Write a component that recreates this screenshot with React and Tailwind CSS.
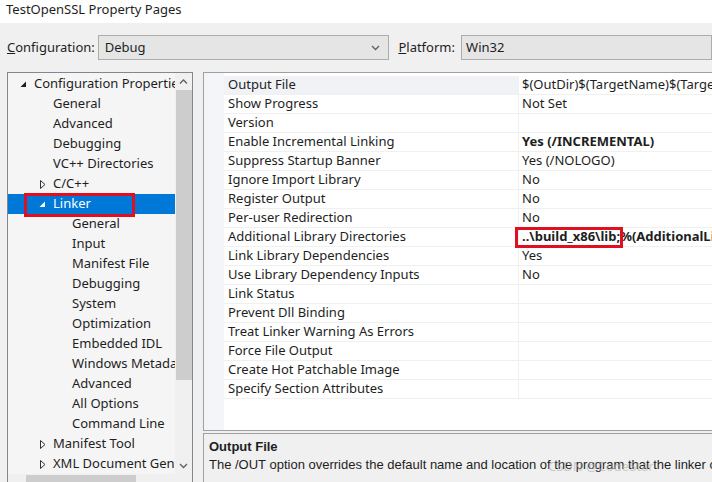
import React from 'react';

const font = { fontFamily: '"Noto Sans", "Liberation Sans", sans-serif' };

const treeRows = [
  { label: 'Configuration Properties', level: 0, icon: 'open' },
  { label: 'General', level: 1 },
  { label: 'Advanced', level: 1 },
  { label: 'Debugging', level: 1 },
  { label: 'VC++ Directories', level: 1 },
  { label: 'C/C++', level: 1, icon: 'closed' },
  { label: 'Linker', level: 1, icon: 'open', selected: true },
  { label: 'General', level: 2 },
  { label: 'Input', level: 2 },
  { label: 'Manifest File', level: 2 },
  { label: 'Debugging', level: 2 },
  { label: 'System', level: 2 },
  { label: 'Optimization', level: 2 },
  { label: 'Embedded IDL', level: 2 },
  { label: 'Windows Metadata', level: 2 },
  { label: 'Advanced', level: 2 },
  { label: 'All Options', level: 2 },
  { label: 'Command Line', level: 2 },
  { label: 'Manifest Tool', level: 1, icon: 'closed' },
  { label: 'XML Document Generator', level: 1, icon: 'closed' },
];

const props = [
  ['Output File', '$(OutDir)$(TargetName)$(TargetExt)'],
  ['Show Progress', 'Not Set'],
  ['Version', ''],
  ['Enable Incremental Linking', 'Yes (/INCREMENTAL)', true],
  ['Suppress Startup Banner', 'Yes (/NOLOGO)'],
  ['Ignore Import Library', 'No'],
  ['Register Output', 'No'],
  ['Per-user Redirection', 'No'],
  ['Additional Library Directories', '..\\build_x86\\lib;%(AdditionalLibraryDirectories)', true],
  ['Link Library Dependencies', 'Yes'],
  ['Use Library Dependency Inputs', 'No'],
  ['Link Status', ''],
  ['Prevent Dll Binding', ''],
  ['Treat Linker Warning As Errors', ''],
  ['Force File Output', ''],
  ['Create Hot Patchable Image', ''],
  ['Specify Section Attributes', ''],
];

const indent = ['pl-[11px]', 'pl-[30px]', 'pl-[49px]'];

function Arrow({ type, light }) {
  if (type === 'open') {
    return (
      <svg width="9" height="9" viewBox="0 0 9 9" className="shrink-0">
        <path d="M7 1.5 L7 7 L1.5 7 Z" fill={light ? '#ffffff' : '#1e1e1e'} />
      </svg>
    );
  }
  if (type === 'closed') {
    return (
      <svg width="9" height="9" viewBox="0 0 9 9" className="shrink-0">
        <path d="M2.5 0.5 L7 4.5 L2.5 8.5 Z" fill="none" stroke="#333" strokeWidth="1" />
      </svg>
    );
  }
  return <span className="w-[9px] shrink-0" />;
}

function Chevron({ dir = 'down', className = '' }) {
  const d = dir === 'down' ? 'M1 1 L4.5 4.5 L8 1' : 'M1 4.5 L4.5 1 L8 4.5';
  return (
    <svg width="9" height="6" viewBox="0 0 9 6" className={className}>
      <path d={d} fill="none" stroke="#606060" strokeWidth="1.3" />
    </svg>
  );
}

export default function App() {
  return (
    <div className="w-[712px] h-[482px] overflow-hidden bg-[#f0f0f0] flex flex-col text-[13px] text-[#1e1e1e] relative" style={font}>
      {/* title bar */}
      <div className="h-[23px] bg-white flex items-center pl-[6px] pb-[3px] shrink-0">TestOpenSSL Property Pages</div>

      {/* configuration row */}
      <div className="h-[49px] flex items-start pt-[12px] shrink-0">
        <span className="ml-[7px] mt-[3px] w-[94px]"><u>C</u>onfiguration:</span>
        <div className="w-[302px] h-[25px] border border-[#adadad] bg-[#e5e5e5] flex items-center justify-between pl-[6px] pr-[8px]">
          <span>Debug</span>
          <Chevron />
        </div>
        <span className="ml-[9px] mt-[3px] w-[65px]"><u>P</u>latform:</span>
        <div className="w-[260px] h-[25px] border border-[#adadad] bg-[#e5e5e5] flex items-center pl-[4px]">Win32</div>
      </div>

      <div className="flex flex-1 min-h-0 pl-[7px]">
        {/* tree */}
        <div className="w-[186px] h-[420px] border border-[#828790] bg-[#f0f0f0] flex flex-col shrink-0">
          <div className="flex flex-1 min-h-0">
            <div className="flex-1 bg-[#f5f5f5] overflow-hidden flex flex-col pt-[1px]">
              {treeRows.map((r, i) => (
                <div
                  key={i}
                  className={`h-[20px] shrink-0 flex items-center gap-[6px] whitespace-nowrap ${indent[r.level]} ${r.selected ? 'bg-[#0078d7] text-white' : ''}`}
                >
                  <Arrow type={r.icon} light={r.selected} />
                  <span>{r.label}</span>
                </div>
              ))}
            </div>
            <div className="w-[17px] bg-[#f0f0f0] flex flex-col items-center">
              <div className="h-[17px] flex items-center"><Chevron dir="up" /></div>
              <div className="w-[16px] h-[290px] bg-[#cdcdcd]" />
              <div className="flex-1" />
              <div className="h-[17px] flex items-center"><Chevron /></div>
            </div>
          </div>
          <div className="h-[17px] bg-[#f0f0f0] flex items-center shrink-0">
            <div className="w-[18px]" />
            <div className="w-[110px] h-[16px] bg-[#cdcdcd]" />
          </div>
        </div>

        {/* right side */}
        <div className="ml-[10px] flex-1 flex flex-col min-w-0">
          <div className="h-[359px] border border-[#a0a0a0] border-r-0 bg-white flex shrink-0 overflow-hidden">
            <div className="w-[20px] bg-[#f3f5f9] shrink-0" />
            <div className="flex-1 flex flex-col pt-[3px] min-w-0">
              {props.map(([name, value, bold], i) => (
                <div key={i} className="h-[19px] shrink-0 flex border-b border-[#f0f0f0] whitespace-nowrap">
                  <div className={`w-[295px] shrink-0 pl-[4px] flex items-center border-r border-[#f0f0f0] ${i === 0 ? 'bg-[#f0f2f6]' : ''}`}>{name}</div>
                  <div className={`pl-[3px] flex items-center ${bold ? 'font-bold' : ''}`}>{value}</div>
                </div>
              ))}
            </div>
          </div>
          <div className="mt-[2px] flex-1 border border-[#a0a0a0] border-r-0 border-b-0 bg-[#f0f0f0] pl-[5px] pt-[4px] whitespace-nowrap overflow-hidden" style={{ fontFamily: '"Liberation Sans", sans-serif' }}>
            <div className="font-bold text-[13px] leading-[18px]">Output File</div>
            <div className="text-[13px] leading-[18px]">The /OUT option overrides the default name and location of the program that the linker creates.</div>
          </div>
        </div>
      </div>

      {/* annotations */}
      <div className="absolute left-[24px] top-[193px] w-[111px] h-[24px] border-[3px] border-[#e01020]" />
      <div className="absolute left-[515px] top-[227px] w-[108px] h-[21px] border-[3px] border-[#e01020]" />
      <div className="absolute left-[548px] top-[457px] text-[13px] text-[#b0b0b0] opacity-60">CSDN @CodeStar</div>
    </div>
  );
}
